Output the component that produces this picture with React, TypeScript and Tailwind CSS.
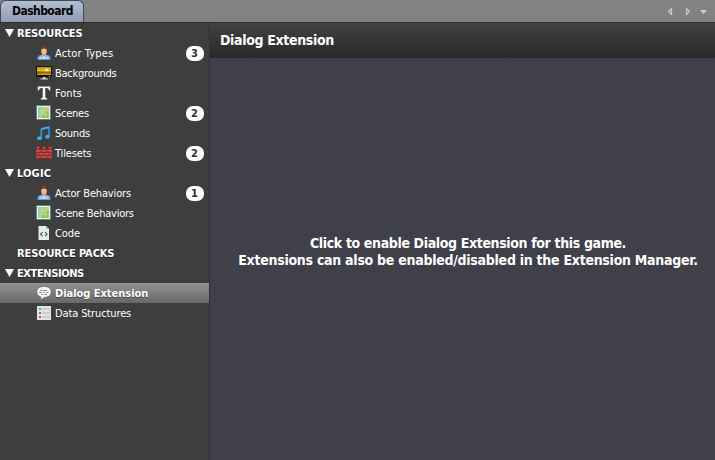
import React from "react";

type IconName = "actor" | "monitor" | "font" | "scene" | "sound" | "bricks" | "code" | "chat" | "data";

function Icon({ name }: { name: IconName }) {
  const common = { width: 16, height: 16, viewBox: "0 0 16 16", className: "block shrink-0" };
  switch (name) {
    case "actor":
      return (
        <svg {...common}>
          <path d="M1.500 15v-2.300Q1.700 10.400 5 9.800h6q3.300.6 3.500 2.900V15Z" fill="#5c97d8" />
          <path d="M2.500 13.300q.2-1.800 2.800-2.400L8 14l2.700-3.100q2.600.6 2.800 2.400L12 14H4Z" fill="#b0d2f5" />
          <path d="M5.700 9.800h4.600L8 14.500Z" fill="#f5f0e9" />
          <path d="M6.500 8h3v2.200L8 12 6.500 10.200Z" fill="#d4935d" />
          <ellipse cx="8" cy="6" rx="2.800" ry="3.600" fill="#edbc90" />
          <path d="M4.500 6.800Q3.600.3 8 .3t3.500 6.500L10.700 4Q8 3.200 5.300 4Z" fill="#5f2f14" />
          <path d="M5.400 2.800Q6.500 1.200 9.800 1.600" fill="none" stroke="#8f6547" strokeWidth=".8" />
        </svg>
      );
    case "monitor":
      return (
        <svg {...common}>
          <defs>
            <linearGradient id="sun" x1="0" x2="0" y1="0" y2="1">
              <stop offset="0" stopColor="#c09008" />
              <stop offset=".45" stopColor="#e6bd20" />
              <stop offset=".65" stopColor="#9c7410" />
              <stop offset="1" stopColor="#d5ac20" />
            </linearGradient>
          </defs>
          <path d="M0 1h16v11H0Z" fill="#15120d" />
          <path d="M1 2h14v8H1Z" fill="url(#sun)" />
          <path d="M1 6.500q4-.7 6 .8l8 .2v1q-7-.5-14 .5Z" fill="#6c500e" opacity=".5" />
          <ellipse cx="10.500" cy="5" rx="2" ry="1.300" fill="#fff28c" />
          <path d="M7 12h2.500v1.500H12v1H4.500v-1H7Z" fill="#d8d8d8" />
          <path d="M13 11h1v1h-1Z" fill="#79d84b" />
        </svg>
      );
    case "font":
      return (
        <svg {...common}>
          <path d="M1.800 1.500h12.400V5.500h-1Q12.800 3 10.800 3H9.300v9q0 1.400 2 1.600v.8H4.700v-.8q2-.2 2-1.600V3H5.200Q3.200 3 2.800 5.500h-1Z" fill="#f4f4f4" />
        </svg>
      );
    case "scene":
      return (
        <svg {...common}>
          <path d="M.5.500h14v14H.500Z" fill="#f1f6f3" stroke="#5b837c" />
          <path d="M2 2h11v11H2Z" fill="#b1d480" />
          <path d="M2 2h4Q3 5 4 8l-1 5H2Z" fill="#86c3cf" />
          <path d="M9 6h4v7H6v-4h3Z" fill="#95c25a" />
          <path d="M5.500 2v11M9.500 2v11M2 5.500h11M2 9.500h11" stroke="#cadd92" strokeWidth=".6" />
        </svg>
      );
    case "sound":
      return (
        <svg {...common}>
          <path d="M5.500 3 13 1v2.200L5.500 5.300Z" fill="#3fa9e8" />
          <path d="M13 1.500v10M5.300 3.500v9.500" fill="none" stroke="#269ee1" strokeWidth="1.600" />
          <ellipse cx="3.500" cy="13.200" rx="2.500" ry="1.900" fill="#39a9e8" />
          <ellipse cx="11.400" cy="11.700" rx="2.400" ry="1.900" fill="#39a9e8" />
        </svg>
      );
    case "bricks":
      return (
        <svg {...common}>
          <path d="M0 14V1h4v3h2V1h4v3h2V1h4v13Z" fill="#8c2826" />
          <path d="M1 2h2v2H1Zm6 0h2v2H7Zm6 0h2v2h-2ZM0 5h4.500v2H0Zm5.500 0h4.500v2H5.500ZM11 5h5v2h-5ZM0 8h2.500v2H0Zm3.500 0h4v2h-4Zm5 0h4v2h-4Zm5 0H16v2h-2.500ZM0 11h4.500v2H0Zm5.500 0h4.500v2H5.500Zm5.500 0h5v2h-5Z" fill="#b8443e" />
          <path d="M1 2.500h2m4 0h2m4 0h2M.5 5.500h4m1 0h4m1 0h5M3.500 8.500h4m1 0h4M.5 11.500h4m1 0h4m1 0h5" stroke="#cf625a" strokeWidth=".6" />
        </svg>
      );
    case "code":
      return (
        <svg {...common}>
          <path d="M2.500 1H10l3 3v11H2.500Z" fill="#e4ebec" />
          <path d="M10 1v3h3Z" fill="#a5b7bb" />
          <path d="M6.600 7.200 4.500 9.200l2.100 2M9 7.200l2.100 2-2.100 2" fill="none" stroke="#4c565c" strokeWidth="1.100" />
        </svg>
      );
    case "chat":
      return (
        <svg {...common}>
          <path d="M8 1.500c4.500 0 7.200 2.100 7.200 5.300S12.500 12.300 8.700 12.300L4.500 15 5 12C2.200 11.300.8 9.300.8 6.800.8 3.600 3.500 1.500 8 1.500Z" fill="#f8f8f8" stroke="#555" strokeWidth=".6" />
          <path d="M4 5.500h2m1 0h4M3 7.500h3.500m1 0h2m1 0h2M5 9.500h2m1 0h3" stroke="#777" strokeWidth=".8" />
        </svg>
      );
    case "data":
      return (
        <svg {...common}>
          <path d="M1 1h14v14H1Z" fill="#e3e3e3" />
          <path d="M6 3h8v2H6Zm0 4h8v2H6Zm0 4h8v2H6Z" fill="#cecece" />
          <path d="M3 3h2v2H3Z" fill="#60bd3e" />
          <path d="M3 7h2v2H3Z" fill="#4f88cc" />
          <path d="M3 11h2v2H3Z" fill="#d84b38" />
        </svg>
      );
  }
}

function Group({ label, tracking, open = true }: { label: string; tracking: string; open?: boolean }) {
  return (
    <div className="flex h-5 items-center pl-[5px]">
      <span className="w-3">
        {open && (
          <svg width="9" height="8" viewBox="0 0 9 8" className="block">
            <path d="M0 0h9L4.500 8Z" fill="#fff" />
          </svg>
        )}
      </span>
      <span className={`pt-[2px] text-[11px] leading-[18px] font-bold [text-shadow:0_1px_0_#222] ${tracking}`}>{label}</span>
    </div>
  );
}

function Item({ icon, label, tracking, count, selected }: { icon: IconName; label: string; tracking: string; count?: number; selected?: boolean }) {
  return (
    <div className={`flex h-5 items-center pl-9 pr-[5px] ${selected ? "bg-linear-to-b from-[#929292] to-[#686868] font-bold [text-shadow:0_1px_1px_#444]" : ""}`}>
      <Icon name={icon} />
      <span className={`ml-[3px] pt-[2px] text-[11px] leading-[18px] ${tracking}`}>{label}</span>
      {count !== undefined && (
        <span className="ml-auto flex h-[15px] w-[18px] items-center justify-center rounded-[7px] bg-white pr-px text-[11px] leading-[15px] font-bold text-[#303030]">{count}</span>
      )}
    </div>
  );
}

export default function App() {
  return (
    <div className="flex h-[460px] w-[715px] flex-col overflow-hidden whitespace-nowrap bg-[#3e3e3e] font-['DejaVu_Sans_Condensed','DejaVu_Sans',sans-serif] [font-stretch:condensed] text-white">
      <header className="flex h-[23px] shrink-0 justify-between border-b border-[#303030] bg-[#828282]">
        <div className="h-[22px] w-[84px] rounded-t-[6px] border border-b-0 border-[#424853] bg-linear-to-b from-[#b2bed1] to-[#8d9db7] pl-[11px] text-[12px] leading-[20px] font-bold tracking-[-0.55px] text-black">Dashboard</div>
        <svg width="47" height="22" viewBox="0 0 47 22">
          <path d="M3.500 8.500v6L.7 11.500Z" fill="none" stroke="#c8c8c8" strokeWidth="1.200" />
          <path d="M18.500 8.500v6l2.800-3Z" fill="none" stroke="#c8c8c8" strokeWidth="1.200" />
          <path d="M32 10h7l-3.500 4Z" fill="#d0d0d0" />
        </svg>
      </header>
      <div className="flex min-h-0 flex-1">
        <aside className="w-[210px] shrink-0 border-r border-[#303030]">
          <Group label="RESOURCES" tracking="tracking-[-0.15px]" />
          <Item icon="actor" label="Actor Types" tracking="tracking-[0.12px]" count={3} />
          <Item icon="monitor" label="Backgrounds" tracking="tracking-[-0.25px]" />
          <Item icon="font" label="Fonts" tracking="tracking-[0px]" />
          <Item icon="scene" label="Scenes" tracking="tracking-[-0.25px]" count={2} />
          <Item icon="sound" label="Sounds" tracking="tracking-[-0.25px]" />
          <Item icon="bricks" label="Tilesets" tracking="tracking-[-0.15px]" count={2} />
          <Group label="LOGIC" tracking="tracking-[0.15px]" />
          <Item icon="actor" label="Actor Behaviors" tracking="tracking-[-0.15px]" count={1} />
          <Item icon="scene" label="Scene Behaviors" tracking="tracking-[-0.25px]" />
          <Item icon="code" label="Code" tracking="tracking-[-0.1px]" />
          <Group label="RESOURCE PACKS" tracking="tracking-[-0.12px]" open={false} />
          <Group label="EXTENSIONS" tracking="tracking-[-0.4px]" />
          <Item icon="chat" label="Dialog Extension" tracking="tracking-[-0.03px]" selected />
          <Item icon="data" label="Data Structures" tracking="tracking-[-0.12px]" />
        </aside>
        <main className="flex min-w-0 flex-1 flex-col bg-[#40404a]">
          <h1 className="h-[35px] shrink-0 bg-linear-to-b from-[#424242] to-[#292929] pl-[10px] text-[14px] leading-[34px] font-bold tracking-[-0.34px]">Dialog Extension</h1>
          <div className="flex flex-1 flex-col items-center pt-[177px] pl-[11px] text-[14px] leading-[17px] font-bold">
            <p className="tracking-[-0.36px]">Click to enable Dialog Extension for this game.</p>
            <p className="tracking-[-0.27px]">Extensions can also be enabled/disabled in the Extension Manager.</p>
          </div>
        </main>
      </div>
    </div>
  );
}
